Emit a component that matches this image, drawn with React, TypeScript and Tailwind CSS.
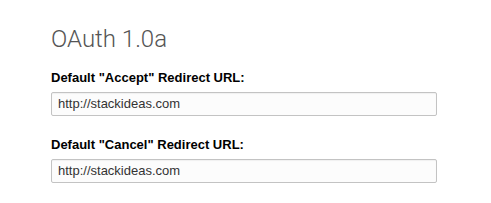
export default function App() {
  return (
    <div className="w-[491px] h-[203px] bg-white pl-[51px] pt-[25px]">
      <h2 className="text-[24px] leading-[28px] font-light text-[#555555] font-['Roboto',sans-serif]">OAuth 1.0a</h2>
      <div className="mt-[17px] flex flex-col">
        <label className="block text-[13px] leading-[16px] font-bold text-black font-['Liberation_Sans',Arial,sans-serif]">
          Default "Accept" Redirect URL:
        </label>
        <div className="mt-[6px] w-[386px] h-[24px] border border-[#c3c3c3] rounded-[2px] bg-[#fcfcfc] shadow-[inset_0_1px_1px_rgba(0,0,0,0.05)] flex items-center pl-[6px] text-[13px] text-[#333333] font-['Liberation_Sans',Arial,sans-serif]">
          http://stackideas.com
        </div>
        <label className="mt-[21px] block text-[13px] leading-[16px] font-bold text-black font-['Liberation_Sans',Arial,sans-serif]">
          Default "Cancel" Redirect URL:
        </label>
        <div className="mt-[6px] w-[386px] h-[24px] border border-[#c3c3c3] rounded-[2px] bg-[#fcfcfc] shadow-[inset_0_1px_1px_rgba(0,0,0,0.05)] flex items-center pl-[6px] text-[13px] text-[#333333] font-['Liberation_Sans',Arial,sans-serif]">
          http://stackideas.com
        </div>
      </div>
    </div>
  );
}
